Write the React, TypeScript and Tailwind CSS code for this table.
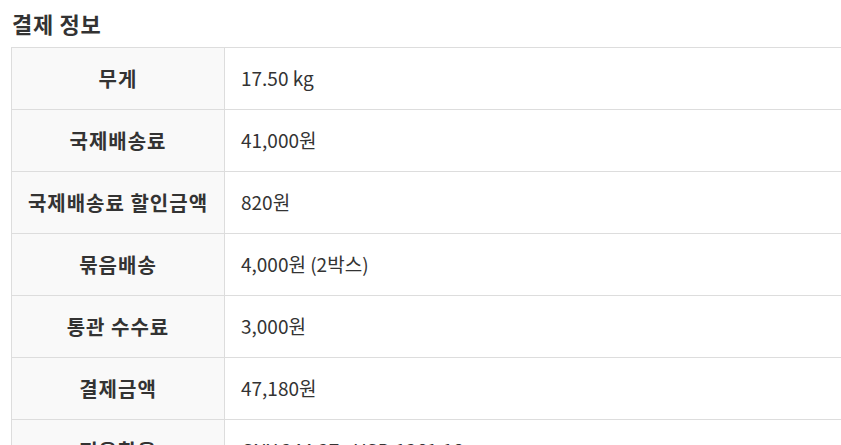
import React from "react";

const rows: [string, string][] = [
  ["무게", "17.50 kg"],
  ["국제배송료", "41,000원"],
  ["국제배송료 할인금액", "820원"],
  ["묶음배송", "4,000원 (2박스)"],
  ["통관 수수료", "3,000원"],
  ["결제금액", "47,180원"],
  ["적용환율", "CNY 244.37 : USD 1361.18"],
];

export default function App() {
  return (
    <div
      className="w-[841px] h-[445px] overflow-hidden bg-white text-[#333]"
      style={{ fontFamily: '"Noto Sans CJK KR", "Noto Sans", sans-serif' }}
    >
      <div className="pl-[11px] pt-[8px]">
        <h2 className="pl-[1px] text-[22px] font-bold leading-[30px] mb-[9px] text-[#333] tracking-[0.7px]">결제 정보</h2>
        <table className="w-[1000px] border-collapse">
          <tbody>
            {rows.map(([k, v]) => (
              <tr key={k} className="h-[62px]">
                <th className="w-[213px] border border-[#dddddd] bg-[#f9f9f9] text-center text-[20px] font-bold text-[#333] p-0 tracking-[1px]">
                  {k}
                </th>
                <td className="border border-[#dddddd] pl-[16px] text-[19px] text-[#333] p-0">{v}</td>
              </tr>
            ))}
          </tbody>
        </table>
      </div>
    </div>
  );
}
